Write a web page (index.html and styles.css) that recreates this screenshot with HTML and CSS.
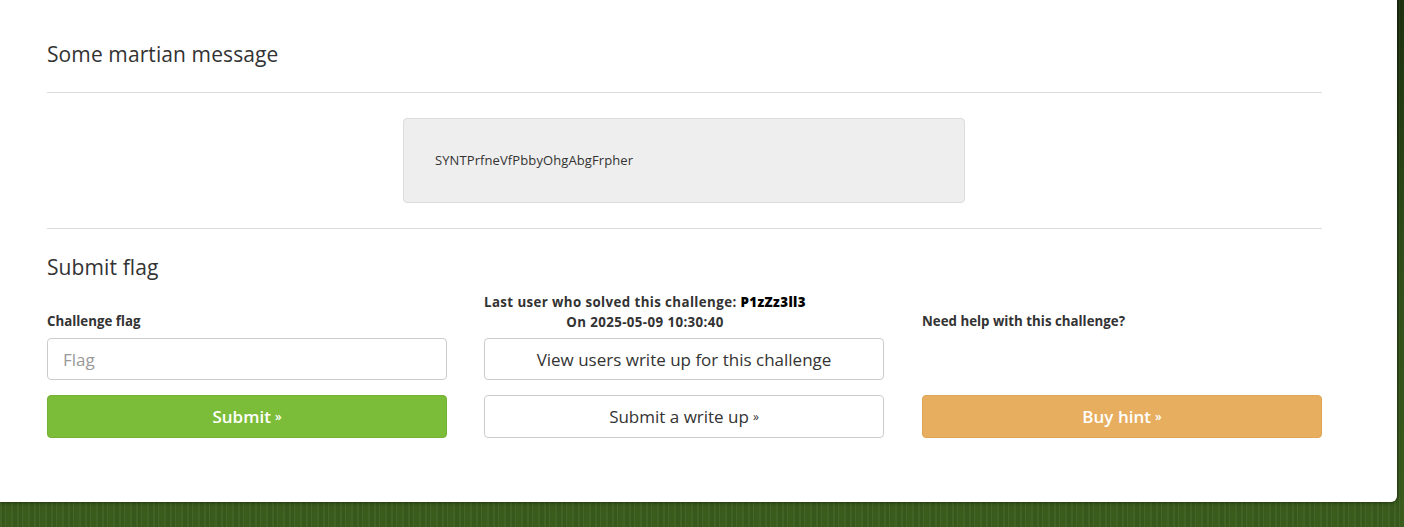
FILE: index.html
```html
<!DOCTYPE html>
<html>
<head>
<meta charset="utf-8">
<link rel="stylesheet" href="styles.css">
</head>
<body>
<div class="page">
  <div class="card">
    <h2 class="title">Some martian message</h2>
    <hr class="rule">
    <div class="message-wrap">
      <div class="message">SYNTPrfneVfPbbyOhgAbgFrpher</div>
    </div>
    <hr class="rule rule-flush">
    <h2 class="title title-sub">Submit flag</h2>
    <div class="cols">
      <div class="col">
        <div class="info"><span class="label">Challenge flag</span></div>
        <div class="field">Flag</div>
        <div class="btn btn-green">Submit <span class="raq">»</span></div>
      </div>
      <div class="col">
        <div class="info"><span class="solver">Last user who solved this challenge: <b>P1zZz3ll3</b><br>On 2025-05-09 10:30:40</span></div>
        <div class="btn btn-white btn-tall">View users write up for this challenge</div>
        <div class="btn btn-white">Submit a write up <span class="raq">»</span></div>
      </div>
      <div class="col col-last">
        <div class="info"><span class="label">Need help with this challenge?</span></div>
        <div class="spacer"></div>
        <div class="btn btn-orange">Buy hint <span class="raq">»</span></div>
      </div>
    </div>
  </div>
</div>
</body>
</html>
```

FILE: styles.css
```css
* { box-sizing: border-box; }
html, body { margin: 0; padding: 0; }
body {
  width: 1404px;
  height: 527px;
  overflow: hidden;
  font-family: "Open Sans", "DejaVu Sans", sans-serif;
  color: #333;
  background-color: #2c4512;
  background-image:
    repeating-linear-gradient(90deg, rgba(255,255,255,0.03) 0 2px, rgba(0,0,0,0.06) 2px 5px, rgba(255,255,255,0.05) 5px 6px, rgba(0,0,0,0.02) 6px 11px, rgba(255,255,255,0.03) 11px 13px, rgba(0,0,0,0.05) 13px 17px),
    linear-gradient(180deg, #1e3210 0, #33521a 55%, #3b5e1d 100%);
}
.page {
  padding-right: 7px;
}
.card {
  width: 1397px;
  height: 502px;
  background: #fff;
  border-bottom-right-radius: 6px;
  box-shadow: 0 0 4px rgba(0,0,0,0.6);
  padding: 39px 75px 0 47px;
}
.title {
  margin: 0;
  font-weight: normal;
  font-size: 21px;
  line-height: 30px;
  color: #333;
  letter-spacing: 0.1px;
}
.title-sub { margin-top: 23px; }
.rule {
  border: 0;
  border-top: 1px solid #dcdcdc;
  margin: 23px 0 0 0;
  height: 0;
}
.rule-flush { margin-top: 0; }
.message-wrap {
  display: flex;
  justify-content: center;
  padding: 25px 1px 25px 0;
}
.message {
  width: 562px;
  height: 85px;
  background: #eee;
  border: 1px solid #dcdcdc;
  border-radius: 4px;
  padding: 0 31px 2px;
  display: flex;
  align-items: center;
  font-size: 13px;
  color: #333;
  letter-spacing: 0.1px;
}
.cols {
  display: grid;
  grid-template-columns: 400px 400px 401px;
  column-gap: 37px;
  margin-top: 10px;
}
.col {
  display: flex;
  flex-direction: column;
}
.col-last { margin-left: 1px; }
.info {
  height: 46px;
  display: flex;
  align-items: flex-end;
  padding-bottom: 6px;
}
.label {
  font-weight: bold;
  font-size: 13.3px;
  line-height: 18px;
  margin-bottom: 2px;
}
.solver {
  font-weight: bold;
  font-size: 13.3px;
  line-height: 20px;
  letter-spacing: 0.4px;
  text-align: center;
  display: inline-block;
}
.solver b { color: #000; }
.field {
  height: 42px;
  border: 1px solid #ccc;
  border-radius: 4px;
  padding: 0 15px;
  display: flex;
  align-items: center;
  font-size: 17px;
  color: #999;
}
.spacer { height: 42px; }
.btn {
  height: 43px;
  border-radius: 4px;
  display: flex;
  align-items: center;
  justify-content: center;
  font-size: 17px;
  margin-top: 15px;
}
.btn-tall { margin-top: 0; height: 42px; }
.raq { font-size: 12px; margin-left: 4px; }
.btn-green {
  background: #7bbd38;
  border: 1px solid #72b132;
  color: #fff;
  font-weight: 600;
}
.btn-orange {
  background: #e7ae5f;
  border: 1px solid #dfa554;
  color: #fff;
  font-weight: 600;
}
.btn-white {
  background: #fff;
  border: 1px solid #ccc;
  color: #333;
}
```
